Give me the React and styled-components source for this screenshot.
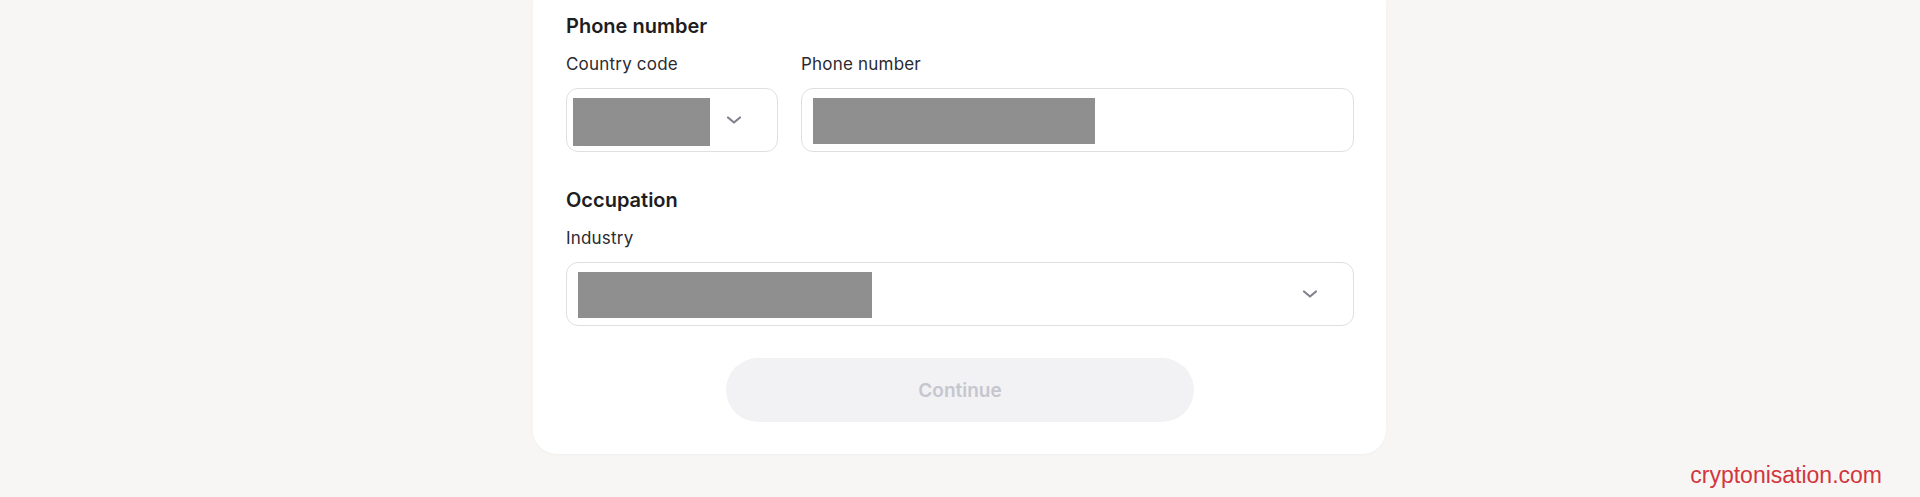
import React from "react";
import styled, { createGlobalStyle } from "styled-components";

const GlobalStyle = createGlobalStyle`
  html, body {
    margin: 0;
    padding: 0;
    background-color: #f7f6f5;
    overflow: hidden;
  }

  body {
    font-family: Inter, "Open Sans", "Noto Sans", sans-serif;
    color: #1d1d22;
  }
`;

const Page = styled.div`
  width: 100%;
  height: 497px;
  position: relative;
  display: flow-root;
`;

const Card = styled.form`
  width: 853px;
  margin: -20px 0 0 533px;
  padding: 32px 32px 32px 33px;
  box-sizing: border-box;
  background-color: #ffffff;
  border-radius: 24px;
  box-shadow: 0 1px 3px rgba(0, 0, 0, 0.03);

  display: flex;
  flex-direction: column;
`;

const Section = styled.section`
  display: flex;
  flex-direction: column;
  gap: 12px;
  margin-top: ${(p) => p.$top || 0}px;
`;

const SectionTitle = styled.h2`
  margin: 0;
  font-size: 20px;
  line-height: 28px;
  font-weight: 600;
  color: #1d1d22;
`;

const FieldRow = styled.div`
  display: flex;
  gap: 23px;
`;

const Field = styled.div`
  display: flex;
  flex-direction: column;
  gap: 12px;
  width: ${(p) => (p.$width ? `${p.$width}px` : "auto")};
  flex: ${(p) => (p.$width ? "none" : "1")};
`;

const Label = styled.label`
  font-size: 17px;
  line-height: 24px;
  font-weight: 400;
  letter-spacing: 0.2px;
  color: #2a2a30;
`;

const Box = styled.div`
  height: 64px;
  box-sizing: border-box;
  border: 1px solid #dfdfe3;
  border-radius: 12px;
  background-color: #ffffff;
  padding: ${(p) => p.$pad || "9px 33px 0 6px"};

  display: flex;
  align-items: flex-start;
  justify-content: space-between;
`;

const Redacted = styled.div`
  width: ${(p) => p.$w}px;
  height: ${(p) => p.$h}px;
  background-color: #8f8f8f;
`;

const Chevron = styled.svg`
  width: 20px;
  height: 20px;
  align-self: center;
  margin-top: ${(p) => p.$dy || 0}px;
  color: #82828e;
`;

const ContinueButton = styled.button`
  width: 468px;
  height: 64px;
  margin: 32px auto 0;
  border: none;
  border-radius: 32px;
  background-color: #f2f2f4;
  color: #c6c6cf;
  font-family: Inter, "Open Sans", sans-serif;
  font-size: 19px;
  font-weight: 600;
  cursor: not-allowed;
`;

const Watermark = styled.div`
  position: absolute;
  right: 38px;
  bottom: 8px;
  font-family: "Liberation Sans", Arial, sans-serif;
  font-size: 23px;
  color: #d2363e;
`;

function ChevronDown({ dy }) {
  return (
    <Chevron $dy={dy} viewBox="0 0 20 20" fill="none">
      <path
        d="M4 7.5l6 5 6-5"
        stroke="currentColor"
        strokeWidth="2.2"
        strokeLinecap="round"
        strokeLinejoin="round"
      />
    </Chevron>
  );
}

export default function App() {
  return (
    <Page>
      <GlobalStyle />
      <Card onSubmit={(e) => e.preventDefault()}>
        <Section>
          <SectionTitle>Phone number</SectionTitle>
          <FieldRow>
            <Field $width={212}>
              <Label>Country code</Label>
              <Box>
                <Redacted $w={137} $h={48} />
                <ChevronDown dy={-9} />
              </Box>
            </Field>
            <Field>
              <Label>Phone number</Label>
              <Box $pad="9px 0 0 11px">
                <Redacted $w={282} $h={46} />
              </Box>
            </Field>
          </FieldRow>
        </Section>

        <Section $top={34}>
          <SectionTitle>Occupation</SectionTitle>
          <Field>
            <Label>Industry</Label>
            <Box $pad="9px 33px 0 11px">
              <Redacted $w={294} $h={46} />
              <ChevronDown dy={-9} />
            </Box>
          </Field>
        </Section>

        <ContinueButton type="submit" disabled>
          Continue
        </ContinueButton>
      </Card>
      <Watermark>cryptonisation.com</Watermark>
    </Page>
  );
}
